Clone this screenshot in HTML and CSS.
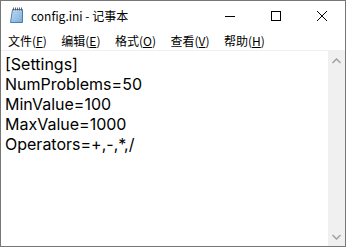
FILE: index.html
```html
<!DOCTYPE html>
<html lang="zh">
<head>
<meta charset="utf-8">
<link rel="stylesheet" href="styles.css">
</head>
<body>
<div class="window">
  <div class="titlebar">
    <svg class="appicon" width="14" height="16" viewBox="0 0 14 16">
      <defs>
        <linearGradient id="pad" x1="0" y1="0" x2="1" y2="1">
          <stop offset="0" stop-color="#cfe6f7"/>
          <stop offset="1" stop-color="#6fa6d6"/>
        </linearGradient>
      </defs>
      <path d="M2.5 2.5 H12.5 V15.5 H0.5 Z" fill="url(#pad)" stroke="#4d7fae" stroke-width="1"/>
      <path d="M3 5.5 H11 M3 8 H11 M2.5 10.5 H11 M2 13 H11" stroke="#9fc3e3" stroke-width="0.8"/>
      <path d="M3.5 0.5 V3.5 M5.5 0.5 V3.5 M7.5 0.5 V3.5 M9.5 0.5 V3.5 M11.5 0.5 V3.5" stroke="#555" stroke-width="0.9"/>
    </svg>
    <span class="title">config.ini - 记事本</span>
    <div class="controls">
      <span class="ctl">
        <svg width="10" height="10" viewBox="0 0 10 10"><path d="M0 5.5 H10" stroke="#000" stroke-width="1"/></svg>
      </span>
      <span class="ctl">
        <svg width="10" height="10" viewBox="0 0 10 10"><rect x="0.5" y="0.5" width="9" height="9" fill="none" stroke="#000" stroke-width="1"/></svg>
      </span>
      <span class="ctl">
        <svg width="10" height="10" viewBox="0 0 10 10"><path d="M0 0 L10 10 M10 0 L0 10" stroke="#000" stroke-width="1"/></svg>
      </span>
    </div>
  </div>
  <div class="menubar">
    <span class="menu">文件(<u>F</u>)</span>
    <span class="menu">编辑(<u>E</u>)</span>
    <span class="menu">格式(<u>O</u>)</span>
    <span class="menu">查看(<u>V</u>)</span>
    <span class="menu">帮助(<u>H</u>)</span>
  </div>
  <div class="editor">
    <div class="text">
      <div class="line">[Settings]</div>
      <div class="line">NumProblems=50</div>
      <div class="line">MinValue=100</div>
      <div class="line">MaxValue=1000</div>
      <div class="line">Operators=+,-,*,/</div>
    </div>
    <div class="scrollbar">
      <svg class="arrow" width="9" height="6" viewBox="0 0 9 6"><path d="M0.5 5 L4.5 1 L8.5 5" fill="none" stroke="#a0a0a0" stroke-width="1.5"/></svg>
      <svg class="arrow" width="9" height="6" viewBox="0 0 9 6"><path d="M0.5 1 L4.5 5 L8.5 1" fill="none" stroke="#a0a0a0" stroke-width="1.5"/></svg>
    </div>
  </div>
</div>
</body>
</html>
```

FILE: styles.css
```css
* { box-sizing: border-box; }
html, body { margin: 0; padding: 0; background: #fff; }
body { width: 346px; height: 247px; overflow: hidden; }
.window {
  width: 346px;
  height: 247px;
  border: 1px solid #777;
  display: flex;
  flex-direction: column;
  background: #fff;
  font-family: "Noto Sans CJK SC", "Noto Sans", sans-serif;
}
.titlebar {
  height: 29px;
  display: flex;
  align-items: center;
  padding-left: 9px;
  flex: none;
}
.appicon { margin-top: -1px; }
.title {
  margin-left: 7px;
  font-size: 12px;
  color: #000;
  flex: 1;
}
.controls { display: flex; height: 100%; }
.ctl {
  width: 46px;
  display: flex;
  align-items: center;
  justify-content: center;
}
.menubar {
  height: 20px;
  display: flex;
  align-items: center;
  padding-left: 7px;
  gap: 14.5px;
  font-size: 12px;
  flex: none;
}
.menu u { text-decoration: underline; text-underline-offset: 1px; }
.editor {
  flex: 1;
  display: flex;
  border-top: 1px solid #f0f0f0;
  min-height: 0;
}
.text {
  flex: 1;
  padding: 3px 0 0 4px;
  font-family: Inter, "Noto Sans", sans-serif;
  font-size: 16px;
  color: #000;
}
.line {
  height: 20px;
  line-height: 20px;
}
.scrollbar {
  width: 17px;
  background: #f0f0f0;
  display: flex;
  flex-direction: column;
  justify-content: space-between;
  align-items: center;
  padding: 7px 0 6px;
}
```
